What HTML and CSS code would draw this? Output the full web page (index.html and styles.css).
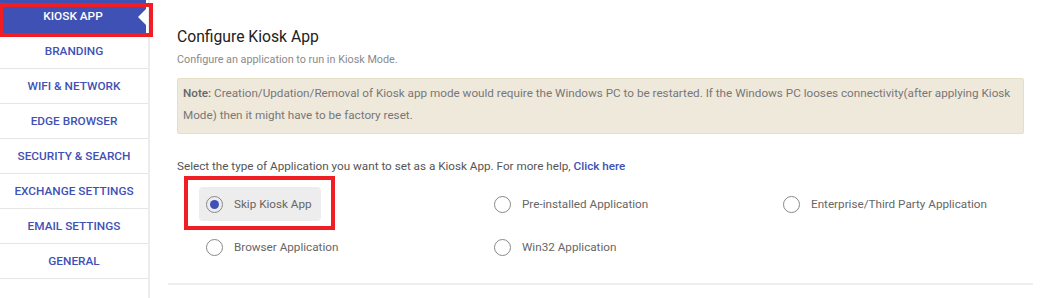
FILE: index.html
```html
<!DOCTYPE html>
<html>
<head>
  <title>Kiosk App</title>
  <link rel="stylesheet" href="styles.css">
</head>
<body>

  <div class="page">

    <nav class="sidebar">
      <a class="navitem active">KIOSK APP</a>
      <a class="navitem">BRANDING</a>
      <a class="navitem">WIFI &amp; NETWORK</a>
      <a class="navitem">EDGE BROWSER</a>
      <a class="navitem">SECURITY &amp; SEARCH</a>
      <a class="navitem">EXCHANGE SETTINGS</a>
      <a class="navitem">EMAIL SETTINGS</a>
      <a class="navitem">GENERAL</a>
    </nav>

    <main class="content">
      <section class="panel">
        <h2>Configure Kiosk App</h2>
        <p class="sub">Configure an application to run in Kiosk Mode.</p>

        <div class="note"><b>Note:</b> Creation/Updation/Removal of Kiosk app mode would require the Windows PC to be restarted. If the Windows PC looses connectivity(after applying Kiosk Mode) then it might have to be factory reset.</div>

        <p class="select">Select the type of Application you want to set as a Kiosk App. For more help, <a class="link">Click here</a></p>

        <div class="options">
          <label class="option checked"><span class="radio"></span>Skip Kiosk App</label>
          <label class="option"><span class="radio"></span>Pre-installed Application</label>
          <label class="option"><span class="radio"></span>Enterprise/Third Party Application</label>
          <label class="option"><span class="radio"></span>Browser Application</label>
          <label class="option"><span class="radio"></span>Win32 Application</label>
        </div>
      </section>
    </main>

  </div>

  <!-- highlight marks -->
  <div class="mark mark-nav"></div>
  <div class="mark mark-option"></div>

</body>
</html>
```

FILE: styles.css
```css
body{
    margin: 0;
    font-family: Roboto, "Liberation Sans", sans-serif;
    background: #fff;
}

.page{
    display: flex;
    height: 298px;
    overflow: hidden;
}

.sidebar{
    width: 148px;
    flex-shrink: 0;
    border-right: 2px solid #ececec;
    display: flex;
    flex-direction: column;
}

.navitem{
    position: relative;
    height: 34px;
    line-height: 34px;
    border-bottom: 1px solid #e6e6e6;
    text-align: center;
    font-size: 11.8px;
    font-weight: 500;
    color: #3f51b5;
}

.navitem.active{
    height: 33px;
    line-height: 33px;
    background: #3f51b5;
    color: #fff;
    margin-right: 2px;
}

.navitem.active:after{
    content: "";
    position: absolute;
    right: 0;
    top: 9px;
    border-top: 8px solid transparent;
    border-bottom: 8px solid transparent;
    border-right: 8px solid #fff;
}

.content{
    flex: 1;
    margin-left: 18px;
    margin-right: 17px;
}

.panel{
    padding: 26px 9px 19px;
    border-bottom: 2px solid #eeeeee;
}

.panel h2{
    margin: 0;
    font-size: 15.7px;
    font-weight: 400;
    line-height: 22px;
    color: #222;
}

.sub{
    margin: 4px 0 0;
    font-size: 10.8px;
    line-height: 16px;
    color: #8a8a8a;
}

.note{
    margin-top: 10px;
    background: #efe9dc;
    border: 1px solid #e6dfc6;
    border-radius: 2px;
    padding: 3px 10px 7px 5px;
    font-size: 11.7px;
    line-height: 22px;
    color: #777;
}

.note b{
    font-weight: 500;
    color: #666;
}

.select{
    margin: 24px 0 0;
    font-size: 11.7px;
    line-height: 16px;
    color: #555;
}

.link{
    color: #3f51b5;
    font-weight: 500;
}

.options{
    display: grid;
    grid-template-columns: 288px 289px 1fr;
    row-gap: 9px;
    margin: 13px 0 0 22px;
}

.option{
    justify-self: start;
    display: flex;
    align-items: center;
    height: 34px;
    padding: 0 9px 0 7px;
    border-radius: 4px;
    font-size: 11.7px;
    color: #666;
}

.option.checked{
    background: #ededed;
}

.radio{
    width: 15px;
    height: 15px;
    border: 1px solid #888;
    border-radius: 50%;
    margin-right: 11px;
    box-sizing: content-box;
    position: relative;
}

.option.checked .radio:after{
    content: "";
    position: absolute;
    left: 3px;
    top: 3px;
    width: 9px;
    height: 9px;
    border-radius: 50%;
    background: #3f51b5;
}

.mark{
    position: absolute;
    border: 4px solid #f01e24;
    box-sizing: border-box;
}

.mark-nav{
    left: -1px;
    top: 3px;
    width: 154px;
    height: 34px;
}

.mark-option{
    left: 184px;
    top: 176px;
    width: 151px;
    height: 54px;
}
```
